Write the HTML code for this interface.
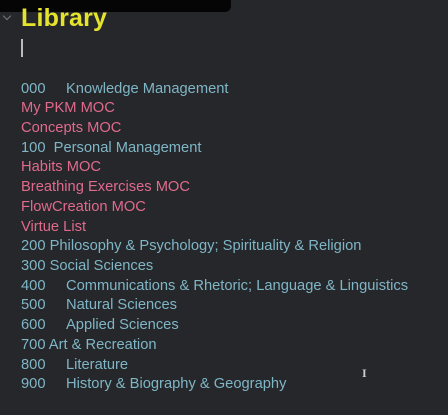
<!DOCTYPE html>
<html><head><meta charset="utf-8"><style>
html,body{margin:0;padding:0;}
body{width:448px;height:415px;background:#26272b;position:relative;overflow:hidden;font-family:"Liberation Sans",sans-serif;}
.bar{position:absolute;left:0;top:0;width:231px;height:12px;background:#050505;border-radius:0 0 6px 0;}
.h{position:absolute;left:21px;top:4px;font-size:25px;font-weight:bold;color:#e4e42c;letter-spacing:0.2px;}
.chev{position:absolute;left:4px;top:13px;width:5px;height:5px;border-right:1.3px solid #777;border-bottom:1.3px solid #777;transform:rotate(45deg);}
.cur{position:absolute;left:21px;top:39px;width:2px;height:18px;background:#bbb;}
.l{position:absolute;left:21px;font-size:14.7px;white-space:nowrap;line-height:18px;}
.b{color:#7fb6c6;}.p{color:#e06a8c;}
.t{position:absolute;left:45px;}
.ib{position:absolute;left:362px;top:366px;color:#ccc;font-size:12px;font-family:"Liberation Serif",serif;font-weight:bold;}
</style></head><body>
<div class="bar"></div>
<div class="chev"></div>
<div class="h">Library</div>
<div class="cur"></div>
<div class="l b" style="top:80px">000<span class="t">Knowledge Management</span></div>
<div class="l p" style="top:99px">My PKM MOC</div>
<div class="l p" style="top:119px">Concepts MOC</div>
<div class="l b" style="top:139px">100&nbsp; Personal Management</div>
<div class="l p" style="top:158px">Habits MOC</div>
<div class="l p" style="top:178px">Breathing Exercises MOC</div>
<div class="l p" style="top:198px">FlowCreation MOC</div>
<div class="l p" style="top:218px">Virtue List</div>
<div class="l b" style="top:237px">200 Philosophy &amp; Psychology; Spirituality &amp; Religion</div>
<div class="l b" style="top:257px">300 Social Sciences</div>
<div class="l b" style="top:277px">400<span class="t">Communications &amp; Rhetoric; Language &amp; Linguistics</span></div>
<div class="l b" style="top:296px">500<span class="t">Natural Sciences</span></div>
<div class="l b" style="top:316px">600<span class="t">Applied Sciences</span></div>
<div class="l b" style="top:336px">700 Art &amp; Recreation</div>
<div class="l b" style="top:356px">800<span class="t">Literature</span></div>
<div class="l b" style="top:375px">900<span class="t">History &amp; Biography &amp; Geography</span></div>
<div class="ib">I</div>
</body></html>
